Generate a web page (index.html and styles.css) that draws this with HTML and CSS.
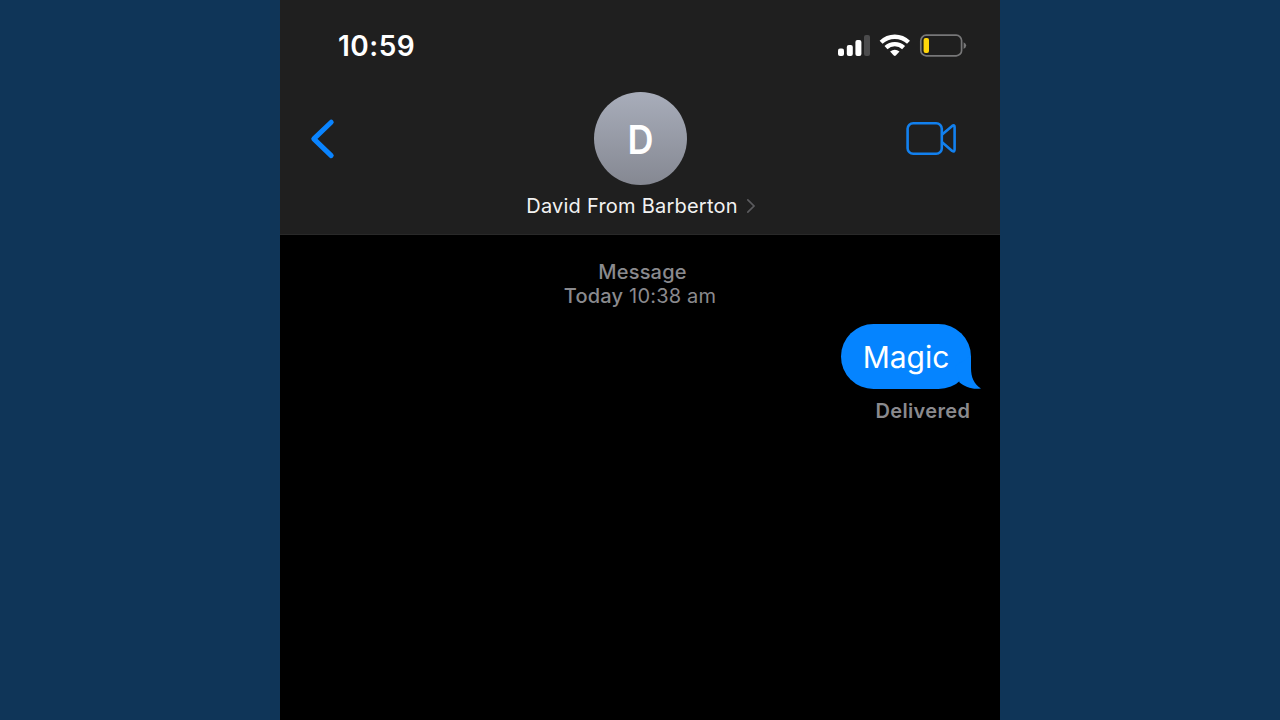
FILE: index.html
```html
<!DOCTYPE html>
<html lang="en">
<head>
  <meta charset="UTF-8"/>
  <title>David From Barberton</title>
  <meta name="viewport" content="width=device-width,initial-scale=1"/>
  <link rel="stylesheet" href="styles.css">
</head>
<body>

<main class="phone">
  <header class="header">
    <!-- Status bar -->
    <div class="status-bar">
      <span class="time">10:59</span>
      <svg class="status-icons" viewBox="0 0 130 26" width="130" height="26">
        <g fill="#fff">
          <rect x="1" y="15.6" width="6" height="7.4" rx="2"/>
          <rect x="9.8" y="12" width="6" height="11" rx="2"/>
          <rect x="18.4" y="7" width="6" height="16" rx="2"/>
        </g>
        <rect x="27" y="2" width="6" height="21" rx="2" fill="#4b4b4c"/>
        <g fill="none" stroke="#fff" stroke-width="4.3">
          <path d="M44.1 9.2A20 20 0 0 1 71.5 9.2"/>
          <path d="M49 14.6A12.7 12.7 0 0 1 66.6 14.6"/>
        </g>
        <path d="M53.1 18.6Q57.8 14.8 62.5 18.6L58.8 22.5Q57.8 23.4 56.8 22.5Z" fill="#fff"/>
        <rect x="83.8" y="2.2" width="40.8" height="20.6" rx="5.4" fill="none" stroke="#777778" stroke-width="1.7"/>
        <rect x="86.6" y="5" width="5.4" height="15" rx="2" fill="#ffd60a"/>
        <path d="M126.6 9.2Q129.2 10.4 129.2 12.6T126.6 16Z" fill="#777778"/>
      </svg>
    </div>

    <!-- Contact -->
    <div class="nav">
      <svg class="back" viewBox="0 0 28 42" width="28" height="42">
        <path d="M22.2 4.2L4.8 20.9L22.2 37.6" fill="none" stroke="#0a84ff" stroke-width="5" stroke-linecap="round" stroke-linejoin="round"/>
      </svg>
      <div class="avatar"><span class="initial">D</span></div>
      <svg class="video" viewBox="0 0 52 36" width="52" height="36">
        <g fill="none" stroke="#1280ee" stroke-width="2.6" stroke-linejoin="round">
          <rect x="2.6" y="2.2" width="34.2" height="30.6" rx="5.6"/>
          <path d="M36.8 13.8L47.2 4.9Q49.6 3.4 49.6 6.2V28.6Q49.6 31.4 47.2 29.9L36.8 21"/>
        </g>
      </svg>
    </div>
    <div class="contact">
      <span class="name">David From Barberton</span>
      <svg class="chevron" viewBox="0 0 10 16" width="10" height="16">
        <path d="M1.8 1.8L8 8L1.8 14.2" fill="none" stroke="#5b5b5e" stroke-width="1.7" stroke-linecap="round"/>
      </svg>
    </div>
  </header>

  <!-- Conversation -->
  <section class="thread">
    <div class="stamp">
      <div class="service">Message</div>
      <div class="date"><b>Today</b> 10:38 am</div>
    </div>
    <div class="bubble">
      <span class="bubble-text">Magic</span>
      <svg class="tail" viewBox="0 0 26 33" width="26" height="33">
        <path d="M16 0V12C16 21 19 28.5 26 32.4C18 34 10 31 4.5 26.5L0 10Z" fill="#0584ff"/>
      </svg>
    </div>
    <div class="delivered">Delivered</div>
  </section>
</main>

</body>
</html>
```

FILE: styles.css
```css
html, body {
  margin: 0; padding: 0; overflow: hidden;
}
body {
  background: #0f3558;
  font-family: Inter, "Liberation Sans", sans-serif;
}
svg {
  display: block;
}
.phone {
  width: 720px;
  height: 720px;
  margin: 0 auto;
  background: #000;
}

/* Header */
.header {
  box-sizing: border-box;
  height: 235px;
  background: #1f1f1f;
  border-bottom: 1px solid #292929;
}
.status-bar {
  box-sizing: border-box;
  height: 92px;
  padding: 0 33px 0 58px;
  display: flex;
  align-items: center;
  justify-content: space-between;
}
.time {
  color: #fff;
  font-size: 28px;
  font-weight: 600;
  line-height: 34px;
  letter-spacing: 0.5px;
}
.nav {
  display: grid;
  grid-template-columns: 1fr auto 1fr;
  align-items: center;
  padding: 0 43px 0 29px;
  height: 93px;
}
.avatar {
  width: 93px;
  height: 93px;
  margin-left: 14px;
  border-radius: 50%;
  background: linear-gradient(#a8adba, #858892);
  display: flex;
  align-items: center;
  justify-content: center;
}
.initial {
  color: #fff;
  font-size: 40px;
  font-weight: 600;
  line-height: 40px;
  padding-top: 2px;
  transform: scaleX(0.9);
}
.video {
  justify-self: end;
}
.contact {
  display: flex;
  align-items: center;
  justify-content: center;
  gap: 8px;
  margin-top: 8px;
  padding-left: 2px;
}
.name {
  color: #f2f2f2;
  font-size: 20px;
  line-height: 26px;
  letter-spacing: 0.23px;
}

/* Messages */
.thread {
  display: flex;
  flex-direction: column;
  align-items: flex-end;
  padding: 25px 30px 0 0;
}
.stamp {
  align-self: stretch;
  margin-right: -30px;
  color: #8a8a8e;
  font-size: 20px;
  line-height: 24px;
  text-align: center;
}
.service {
  padding-left: 5px;
  font-weight: 500;
  letter-spacing: 0.2px;
}
.date {
  letter-spacing: 0.2px;
}
.date b {
  font-weight: 500;
}
.bubble {
  position: relative;
  width: 130px;
  height: 65px;
  margin: 16px -1px 0 0;
  border-radius: 32.5px;
  background: #0584ff;
  display: flex;
  align-items: center;
  justify-content: center;
}
.bubble-text {
  color: #fff;
  font-size: 30px;
  line-height: 36px;
}
.tail {
  position: absolute;
  right: -10px;
  bottom: 0;
}
.delivered {
  margin-top: 10px;
  color: #8a8a8e;
  font-size: 20px;
  font-weight: 600;
  line-height: 24px;
  letter-spacing: 0.35px;
  margin-right: -0.35px;
}
```
